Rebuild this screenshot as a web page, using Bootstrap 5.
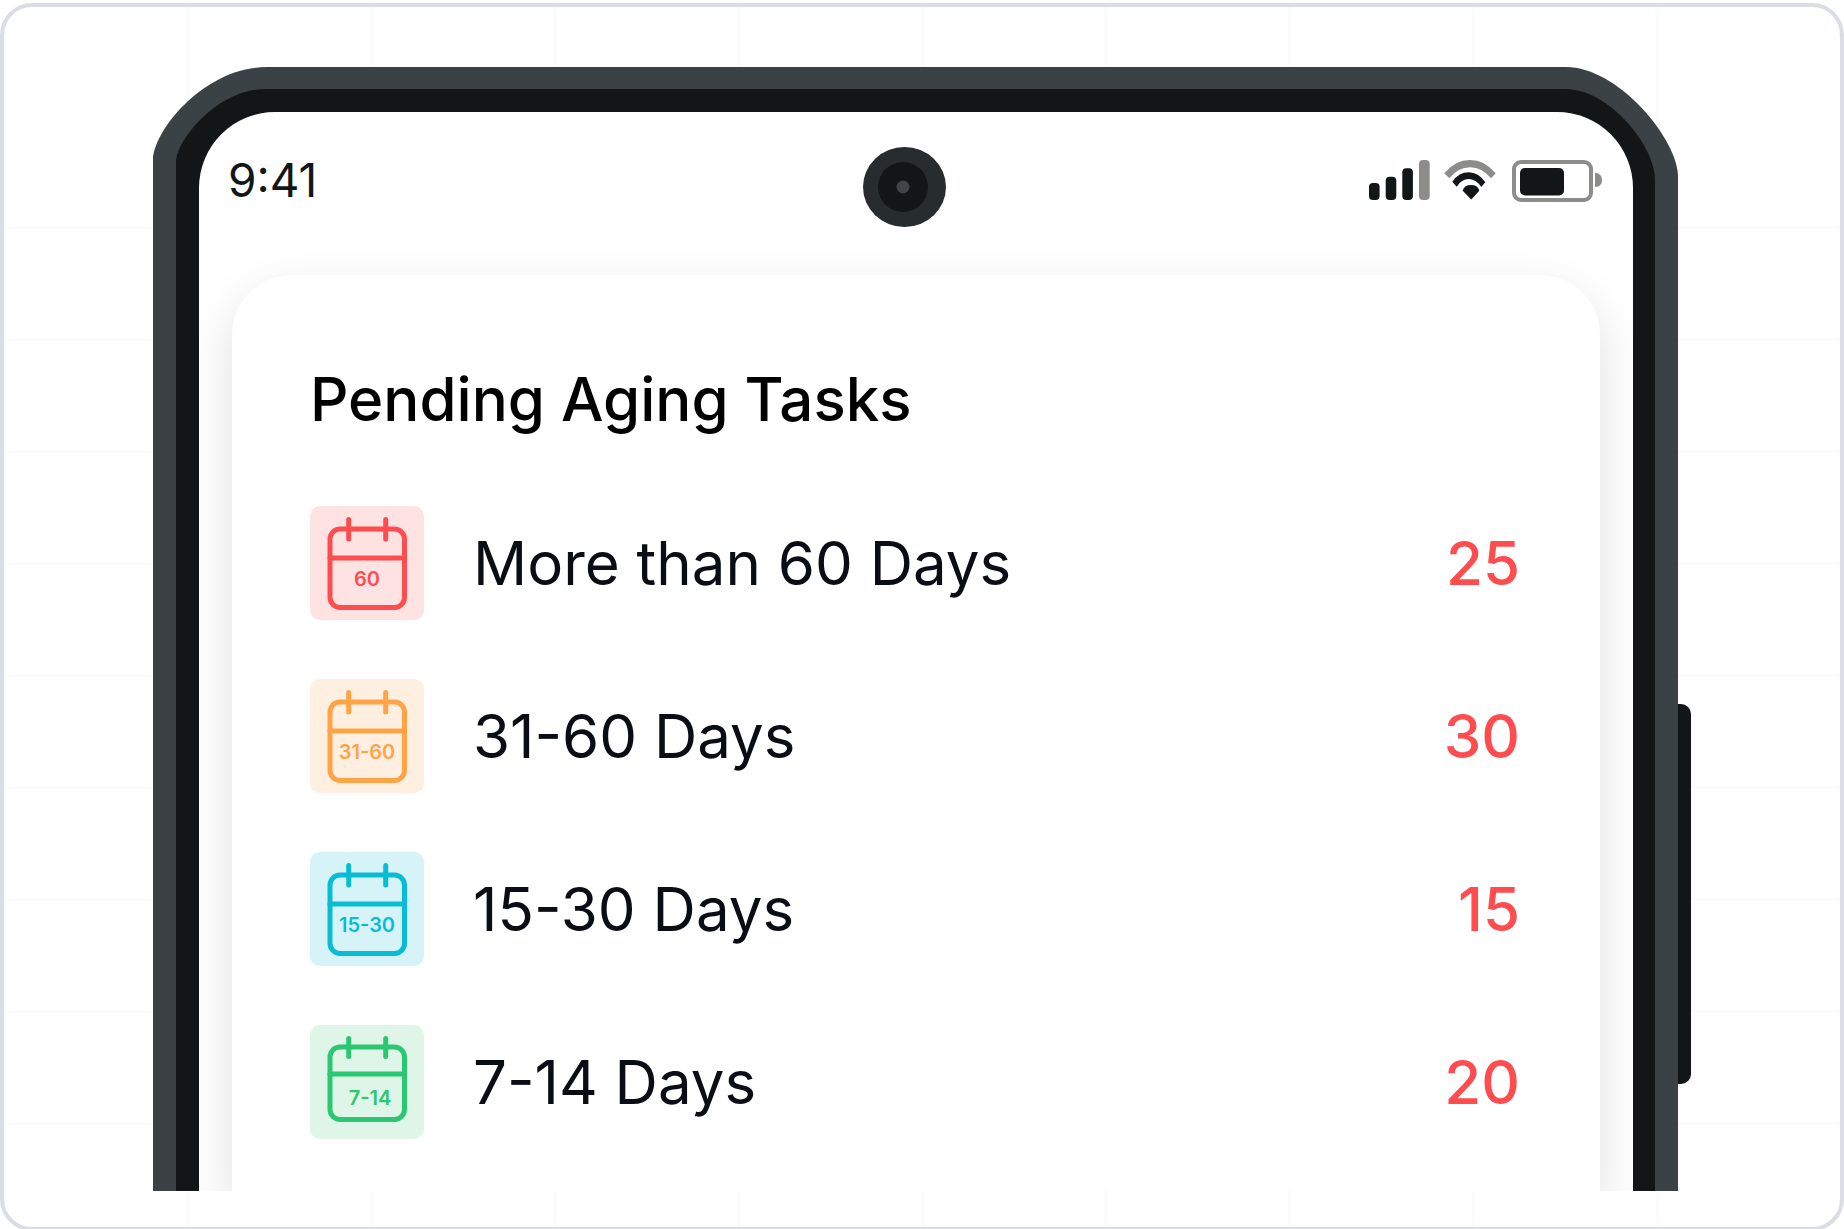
<!DOCTYPE html>
<html lang="en">
<head>
<meta charset="utf-8">
<meta name="viewport" content="width=device-width, initial-scale=1">
<title>Pending Aging Tasks</title>
<link href="https://cdn.jsdelivr.net/npm/bootstrap@5.3.0/dist/css/bootstrap.min.css" rel="stylesheet">
<style>
  body { font-family: Inter, "Liberation Sans", sans-serif; background: #fff; }
  .stage { height: calc(100vh + 2px); min-height: 1000px; padding-top: 3px; }
  .stage-frame {
    flex: 0 0 100%;
    border: 4px solid #dadde3;
    border-radius: 32px;
    padding: 60px 162px 36px 149px;
    background-image:
      linear-gradient(to right, #fbfbfb 3px, transparent 3px),
      linear-gradient(#fff, #fff),
      linear-gradient(to bottom, #fbfbfb 3px, transparent 3px);
    background-size: 10% 100%, 100% 180px, 100% 112px;
    background-position: -1px 0, 0 0, 0 107px;
    background-repeat: repeat, no-repeat, repeat;
  }
  .phone { isolation: isolate; padding: 45px 45px 0 46px; }
  .shell { z-index: -1; }
  .shell-side { width: 130px; height: 100%; overflow: hidden; }
  .shell-bar { background: linear-gradient(#3b4245 22px, #121616 22px); }
  .power-key {
    left: 100%; top: 637px; width: 13px; height: 380px;
    background: #121616; border-radius: 0 10px 10px 0;
  }
  .screen { background: #fff; border-radius: 76px 76px 0 0; }
  .status { height: 163px; padding: 35px 31px 0 29px; }
  .clock { font-size: 46px; line-height: 66px; color: #121616; }
  .camera { margin-right: 21px; }
  .signals { padding-top: 13px; }
  .task-card {
    margin: 0 33px;
    padding: 86px 80px 0 78px;
    border-radius: 60px 60px 0 0;
    box-shadow: 0 20px 50px rgba(0, 0, 0, .13);
  }
  .task-title { font-size: 60px; line-height: 76px; font-weight: 500; color: #000; margin-bottom: 69px; }
  .task-list { gap: 59px; font-size: 60px; line-height: 72px; color: #0a0d14; }
  .task-row { gap: 49px; }
  .task-count { color: #ff4d4f; font-weight: 500; }
  .tile { width: 114px; height: 114px; border-radius: 10px; }
  .tile text { font-size: 20px; font-weight: 600; fill: currentColor; text-anchor: middle; }
  .tile-red { color: #ff4d4f; background: #ffe3e3; }
  .tile-orange { color: #ffa347; background: #ffefe0; }
  .tile-cyan { color: #08bcd4; background: #d6f3f8; }
  .tile-green { color: #2bc772; background: #def5e7; }
</style>
<script src="https://cdn.jsdelivr.net/npm/bootstrap@5.3.0/dist/js/bootstrap.bundle.min.js"></script>
</head>
<body class="overflow-hidden">
<div class="stage d-flex flex-column">
  <main class="stage-frame d-flex flex-column">
    <div class="phone position-relative flex-fill d-flex flex-column">
      <div class="shell position-absolute top-0 start-0 w-100 h-100 d-flex" aria-hidden="true">
        <svg class="shell-side flex-shrink-0">
          <path fill="#3b4245" d="M0 4000V90C3 61 52 0 114 0H131V4000Z"/>
          <path fill="#121616" d="M23 4000V93C26 69 67 22 112 22H131V4000Z"/>
        </svg>
        <div class="shell-bar flex-fill"></div>
        <svg class="shell-side flex-shrink-0">
          <path fill="#3b4245" d="M0 0H18C70 0 130 72 130 110V4000H0Z"/>
          <path fill="#121616" d="M0 22H18C60 22 107 78 107 113V4000H0Z"/>
        </svg>
      </div>
      <div class="power-key position-absolute"></div>

      <div class="screen flex-fill d-flex flex-column overflow-hidden">
        <header class="status d-flex align-items-start">
          <div class="clock col">9:41</div>
          <svg class="camera flex-shrink-0" width="83" height="80" viewBox="0 0 83 80" aria-hidden="true">
            <ellipse cx="41.500" cy="40" rx="41.500" ry="40" fill="#272c2e"/>
            <circle cx="40" cy="40" r="25" fill="#121616"/>
            <circle cx="40" cy="40" r="6.500" fill="#3f4548"/>
          </svg>
          <div class="signals col d-flex justify-content-end">
            <svg width="233" height="42" viewBox="0 0 233 42" role="img" aria-label="Signal, Wi-Fi and battery">
              <g fill="#121616">
                <rect x="0" y="23" width="10.600" height="17" rx="4"/>
                <rect x="16.700" y="16.700" width="10.600" height="23.300" rx="4"/>
                <rect x="33.300" y="8.300" width="10.600" height="31.700" rx="4"/>
                <path d="M83.300 21.700Q90 12.300 99.700 12.300Q109.500 12.300 116.300 22.300L112.300 27Q107 19 99.700 19Q92.500 19 87.700 26.700Z"/>
                <path d="M93.700 30.700Q95 25 102 25Q109 25 110.300 30.700L102.300 39.500Z"/>
                <rect x="151" y="8" width="44" height="27.500" rx="5"/>
              </g>
              <g fill="#8c8c8a">
                <rect x="50" y="0" width="10.700" height="40" rx="4"/>
                <path d="M75.300 13.300Q86 0 101 0Q116 0 126.700 13.300L122 18.300Q113 7.300 101 7.300Q89 7.300 80.300 18.300Z"/>
                <path d="M226 12.700Q233 13.500 233 20T226 27Z"/>
              </g>
              <rect x="145" y="2" width="77" height="38" rx="7" fill="none" stroke="#8c8c8a" stroke-width="4"/>
            </svg>
          </div>
        </header>

        <section class="task-card bg-white flex-fill">
          <h1 class="task-title">Pending Aging Tasks</h1>
          <ul class="task-list list-unstyled d-flex flex-column mb-0">
            <li class="task-row d-flex align-items-center">
              <svg class="tile tile-red flex-shrink-0" viewBox="0 0 114 114" aria-hidden="true">
                <g fill="none" stroke="currentColor" stroke-width="5" stroke-linecap="round">
                  <rect x="20" y="23" width="74.500" height="78.500" rx="10"/><path d="M20 52H94.500M38.700 13.500V33M75.700 13.500V33"/>
                </g>
                <text x="57" y="80">60</text>
              </svg>
              <span class="flex-fill">More than 60 Days</span>
              <span class="task-count">25</span>
            </li>
            <li class="task-row d-flex align-items-center">
              <svg class="tile tile-orange flex-shrink-0" viewBox="0 0 114 114" aria-hidden="true">
                <g fill="none" stroke="currentColor" stroke-width="5" stroke-linecap="round">
                  <rect x="20" y="23" width="74.500" height="78.500" rx="10"/><path d="M20 52H94.500M38.700 13.500V33M75.700 13.500V33"/>
                </g>
                <text x="57" y="80">31-60</text>
              </svg>
              <span class="flex-fill">31-60 Days</span>
              <span class="task-count">30</span>
            </li>
            <li class="task-row d-flex align-items-center">
              <svg class="tile tile-cyan flex-shrink-0" viewBox="0 0 114 114" aria-hidden="true">
                <g fill="none" stroke="currentColor" stroke-width="5" stroke-linecap="round">
                  <rect x="20" y="23" width="74.500" height="78.500" rx="10"/><path d="M20 52H94.500M38.700 13.500V33M75.700 13.500V33"/>
                </g>
                <text x="57" y="80">15-30</text>
              </svg>
              <span class="flex-fill">15-30 Days</span>
              <span class="task-count">15</span>
            </li>
            <li class="task-row d-flex align-items-center">
              <svg class="tile tile-green flex-shrink-0" viewBox="0 0 114 114" aria-hidden="true">
                <g fill="none" stroke="currentColor" stroke-width="5" stroke-linecap="round">
                  <rect x="20" y="22" width="74.500" height="72.500" rx="10"/><path d="M20 49H94.500M38.700 13.500V31.500M75.700 13.500V31.500"/>
                </g>
                <text x="60" y="80">7-14</text>
              </svg>
              <span class="flex-fill">7-14 Days</span>
              <span class="task-count">20</span>
            </li>
          </ul>
        </section>
      </div>
    </div>
  </main>
</div>
</body>
</html>
